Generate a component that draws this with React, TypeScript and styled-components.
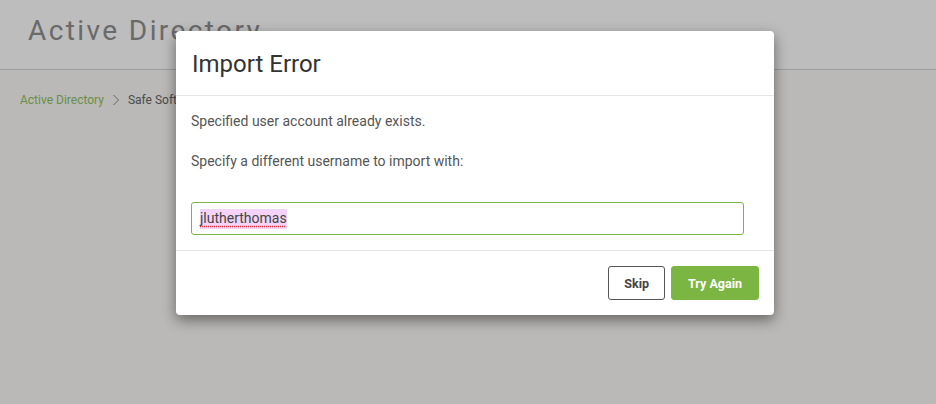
import React from "react";
import styled, { createGlobalStyle } from "styled-components";

const Global = createGlobalStyle`
  html, body { margin: 0; padding: 0; }
  body { font-family: Roboto, "Liberation Sans", Arial, sans-serif; background: #fbfaf9; }
  * { box-sizing: border-box; }
`;

const Page = styled.div`
  position: relative;
  width: 936px;
  height: 404px;
  overflow: hidden;
  background: #fbfaf9;
`;

const Header = styled.header`
  height: 70px;
  background: #ffffff;
  border-bottom: 1px solid #d3d5da;
  display: flex;
  align-items: center;
  padding: 0 0 0 28px;
`;

const PageTitle = styled.h1`
  margin: 0;
  font-weight: 400;
  font-size: 28px;
  letter-spacing: 2.4px;
  color: #8f8f8f;
  padding-bottom: 8px;
`;

const Breadcrumbs = styled.nav`
  display: flex;
  align-items: center;
  gap: 8px;
  padding: 23px 0 0 20px;
  font-size: 12px;
`;

const Crumb = styled.span<{ $active?: boolean }>`
  color: ${(p) => (p.$active ? "#8fc25e" : "#666")};
`;

const Overlay = styled.div`
  position: absolute;
  inset: 0;
  background: rgba(0, 0, 0, 0.26);
`;

const Dialog = styled.div`
  position: absolute;
  left: 176px;
  top: 31px;
  width: 598px;
  background: #fff;
  border-radius: 4px;
  box-shadow: 0 5px 14px rgba(0, 0, 0, 0.45);
  display: flex;
  flex-direction: column;
`;

const DialogHeader = styled.div`
  height: 65px;
  padding: 0 16px;
  display: flex;
  align-items: center;
  border-bottom: 1px solid #e5e5e5;
`;

const DialogTitle = styled.h2`
  margin: 0;
  font-weight: 400;
  font-size: 24px;
  color: #333;
  padding-top: 2px;
`;

const DialogBody = styled.div`
  padding: 15px 15px 15px;
  border-bottom: 1px solid #e5e5e5;
`;

const Text = styled.p`
  margin: 0 0 20px;
  font-size: 14px;
  line-height: 20px;
  color: #555;
`;

const Field = styled.div`
  margin-top: 31px;
  margin-right: 15px;
  height: 33px;
  border: 1px solid #7cb642;
  border-radius: 3px;
  display: flex;
  align-items: center;
  padding: 0 8px;
  font-size: 14px;
  color: #444;
`;

const Selected = styled.span`
  background: #f3d3f7;
  text-decoration: underline dotted #e0303a;
  text-underline-offset: 3px;
  padding: 1px 0 3px;
`;

const DialogFooter = styled.div`
  height: 64px;
  padding: 0 15px;
  display: flex;
  align-items: center;
  justify-content: flex-end;
  gap: 6px;
`;

const Button = styled.button<{ $primary?: boolean }>`
  height: 34px;
  padding: 0 ${(p) => (p.$primary ? 16 : 15)}px;
  font-family: Roboto, "Liberation Sans", Arial, sans-serif;
  font-size: 12.5px;
  font-weight: 700;
  border-radius: 3px;
  cursor: pointer;
  border: 1px solid ${(p) => (p.$primary ? "#7cb642" : "#555")};
  background: ${(p) => (p.$primary ? "#7cb642" : "#fff")};
  color: ${(p) => (p.$primary ? "#fff" : "#444")};
`;

const Chevron = () => (
  <svg width="8" height="12" viewBox="0 0 8 12" fill="none">
    <path d="M1.5 1 L6.5 6 L1.5 11" stroke="#888" strokeWidth="1" />
  </svg>
);

export default function App() {
  return (
    <Page>
      <Global />
      <Header>
        <PageTitle>Active Directory</PageTitle>
      </Header>
      <Breadcrumbs>
        <Crumb $active>Active Directory</Crumb>
        <Chevron />
        <Crumb>Safe Software</Crumb>
      </Breadcrumbs>
      <Overlay />
      <Dialog>
        <DialogHeader>
          <DialogTitle>Import Error</DialogTitle>
        </DialogHeader>
        <DialogBody>
          <Text>Specified user account already exists.</Text>
          <Text>Specify a different username to import with:</Text>
          <Field>
            <Selected>jlutherthomas</Selected>
          </Field>
        </DialogBody>
        <DialogFooter>
          <Button>Skip</Button>
          <Button $primary>Try Again</Button>
        </DialogFooter>
      </Dialog>
    </Page>
  );
}
